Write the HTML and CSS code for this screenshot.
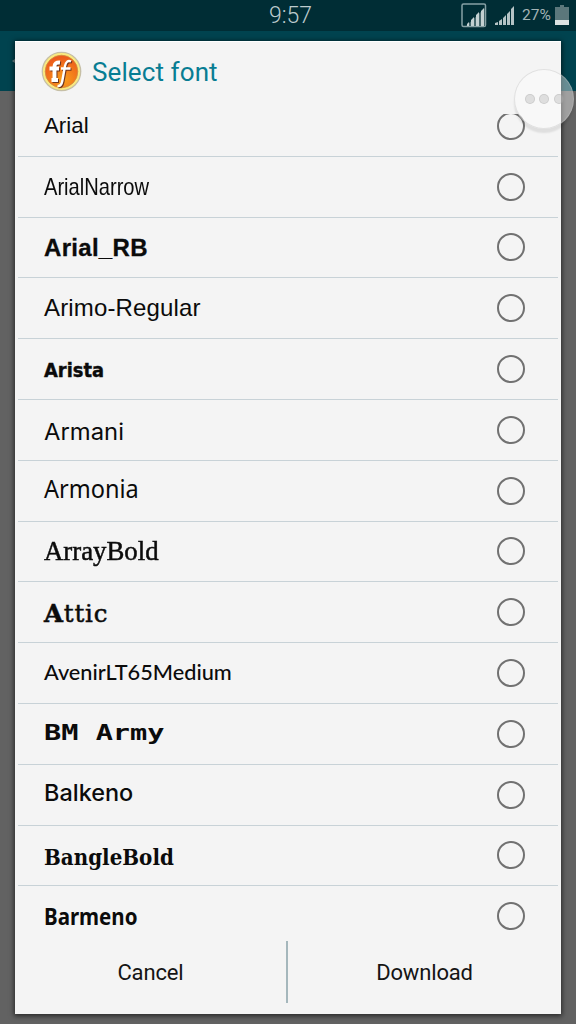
FILE: index.html
```html
<!DOCTYPE html>
<html lang="en">
<head>
<meta charset="utf-8">
<title>Select font</title>
<link rel="stylesheet" href="styles.css">
</head>
<body>
<div class="screen">
  <header class="status">
    <span class="clock">9:57</span>
    <div class="tray">
      <svg class="sim" width="26" height="25" viewBox="0 0 26 25"><rect x="1" y="1" width="23.5" height="22.5" rx="1.5" fill="none" stroke="#86a1a5" stroke-width="1.5"/><path d="M5 23L24 5V23Z" fill="#45666b"/><path d="M6 23v-2l2-2v4zM10 23v-6l3-3v9zM15 23v-11l3-3v14zM20 23V8l3-3v18z" fill="#c3d0d1"/></svg>
      <svg class="bars" width="20" height="21" viewBox="0 0 20 21"><path d="M0 20v-2l3-1v3zM4 20v-4l3-2v6zM8 20v-7l3-3v10zM12 20V9l3-3v14zM16 20V4l3-3v19z" fill="#b5c3c5"/></svg>
      <span class="percent">27%</span>
      <svg class="battery" width="14" height="21" viewBox="0 0 14 21"><path d="M5 0h4v2h5v14H0V2h5z" fill="#5b777b"/><path d="M0 15h14v5H0z" fill="#dce2e2"/></svg>
    </div>
  </header>
  <div class="appbar"><svg width="6" height="8" viewBox="0 0 6 8"><path d="M6 0L0 4L6 8Z" fill="#71898d"/></svg></div>
  <section class="dialog">
    <div class="title">
      <svg width="41" height="41" viewBox="0 0 41 41">
        <defs><radialGradient id="orange" cx=".55" cy=".75" r=".7"><stop offset="0" stop-color="#f9a01b"/><stop offset="1" stop-color="#ed5a1c"/></radialGradient></defs>
        <circle cx="20.5" cy="20.5" r="19.2" fill="#faea80" stroke="#c6bfa6" stroke-width="1.3"/>
        <circle cx="20.5" cy="20.5" r="16.3" fill="url(#orange)" stroke="#cf8a42" stroke-width=".8"/>
        <g class="mark" fill="none">
          <path d="M13.500 30V15.500Q13.500 11 19 11.500M8.500 17.500H18M10.500 29H17" stroke-width="3.900"/>
          <path d="M30 10.500Q25.500 8.500 24 15L21.300 30Q20.300 35.500 16.500 35M20 17.500H29.500" stroke-width="2.400"/>
        </g>
      </svg>
      <h1>Select font</h1>
    </div>
    <div class="list">
      <div class="row"><span class="arial">Arial</span><i class="radio"></i></div>
      <div class="row"><span class="narrow">ArialNarrow</span><i class="radio"></i></div>
      <div class="row"><span class="arial-rb">Arial_RB</span><i class="radio"></i></div>
      <div class="row"><span class="arimo">Arimo-Regular</span><i class="radio"></i></div>
      <div class="row"><span class="arista">Arista</span><i class="radio"></i></div>
      <div class="row"><span class="armani">Armani</span><i class="radio"></i></div>
      <div class="row"><span class="armonia">Armonia</span><i class="radio"></i></div>
      <div class="row"><span class="array">ArrayBold</span><i class="radio"></i></div>
      <div class="row"><span class="attic"><b>A</b>ttic</span><i class="radio"></i></div>
      <div class="row"><span class="avenir">AvenirLT65Medium</span><i class="radio"></i></div>
      <div class="row"><span class="army">BM Army</span><i class="radio"></i></div>
      <div class="row"><span class="balkeno">Balkeno</span><i class="radio"></i></div>
      <div class="row"><span class="bangle">BangleBold</span><i class="radio"></i></div>
      <div class="row"><span class="barmeno">Barmeno</span><i class="radio"></i></div>
    </div>
    <div class="actions"><div class="action">Cancel</div><div class="action">Download</div></div>
  </section>
  <div class="floating"><i></i><i></i><i></i></div>
</div>
</body>
</html>
```
FILE: styles.css
```css
* { box-sizing: border-box; }
body { margin: 0; font-family: Roboto, sans-serif; }
.screen { position: relative; width: 576px; height: 1024px; overflow: hidden; background: #626262; }
.status { height: 31px; background: #002d35; display: flex; justify-content: flex-end; position: relative; }
.clock { position: absolute; left: 269px; top: 2px; font-size: 23px; line-height: 28px; font-weight: 300; color: #bdcbcd; }
.tray { display: flex; align-items: flex-start; padding-right: 7px; }
.sim { margin-top: 3px; }
.bars { margin: 5px 0 0 8px; }
.percent { width: 30px; margin: 6px 3px 0 7px; font-size: 15.5px; line-height: 19px; color: #a4b4b6; }
.battery { margin-top: 5px; }
.appbar { height: 60px; background: #00434f; padding: 26px 0 0 12px; }
.appbar svg { display: block; }
.dialog { position: absolute; left: 15px; top: 41px; width: 546px; height: 973px; background: #f4f4f4; border-top: 1px solid #fff; box-shadow: 0 1px 5px 1px rgba(0, 0, 0, .6); display: flex; flex-direction: column; }
.title { height: 72px; flex: none; display: flex; padding: 9px 0 0 26px; gap: 10px; }
.title h1 { margin: 2px 0 0; font-size: 26px; line-height: 38px; font-weight: 400; color: #087d93; letter-spacing: .1px; }
.mark { stroke: #fff; filter: drop-shadow(1px 1px .5px #70351f); }
.list { height: 826px; flex: none; margin: 0 3px; overflow: hidden; }
.row { height: 60.8px; padding: 0 33px 0 26px; border-bottom: 1px solid #c8d2d7; display: flex; align-items: center; justify-content: space-between; color: #0b0b0b; }
.row:first-child { margin-top: -18px; }
.row:last-child { border-bottom-color: transparent; }
.row span { white-space: nowrap; transform-origin: 0 50%; }
.radio { width: 28px; height: 28px; border: 2px solid #717171; border-radius: 50%; }
.arial { font: 22.3px "Liberation Sans", sans-serif; }
.narrow { font: 24px "Liberation Sans", sans-serif; transform: scaleX(.838); }
.arial-rb { font: bold 24px "Liberation Sans", sans-serif; letter-spacing: .3px; -webkit-text-stroke: .3px; transform: translateY(1px); }
.arimo { font: 24px "Liberation Sans", sans-serif; letter-spacing: .15px; }
.arista { font: bold 19px "DejaVu Sans", sans-serif; transform: translateY(1px) scaleX(.94); -webkit-text-stroke: .4px; }
.armani { font: 22.5px Inter, sans-serif; transform: translateY(2px) scaleX(1.06); }
.armonia { font: 24.5px "Noto Sans", sans-serif; transform: translateY(-2px) scaleX(.96); }
.array { font: 27px "Liberation Serif", serif; -webkit-text-stroke: .5px; transform: scaleX(.992); }
.attic { font: 24.5px "DejaVu Serif", serif; letter-spacing: .8px; -webkit-text-stroke: .5px; transform: translateY(1px); }
.avenir { font: 500 21.5px Lato, sans-serif; transform: translateY(-1px) scaleX(1.01); }
.army { font: bold 22px "DejaVu Sans Mono", monospace; transform: translateY(-1px) scaleX(1.3); }
.balkeno { font: 500 23px Inter, sans-serif; transform: translateY(-2px) scaleX(1.02); }
.bangle { font: bold 23px "DejaVu Serif", serif; transform: translateY(1px) scaleX(.865); }
.barmeno { font: bold 24px "Noto Sans", sans-serif; transform: translateY(-1px) scaleX(.855); }
.actions { flex: 1; display: flex; padding-top: 1px; }
.action { flex: 0 0 271px; height: 62px; display: flex; align-items: center; justify-content: center; font-size: 22px; color: #141414; letter-spacing: -.15px; }
.action + .action { flex: 1; border-left: 2px solid #a5b7bc; }
.floating { position: absolute; left: 514px; top: 69px; width: 60px; height: 60px; border-radius: 50%; background: rgba(255, 255, 255, .4); border: 1px solid rgba(190, 190, 190, .4); box-shadow: 0 4px 2px rgba(0, 0, 0, .09); display: flex; align-items: center; justify-content: center; gap: 4.5px; }
.floating i { width: 10px; height: 10px; border-radius: 50%; background: rgba(180, 180, 180, .38); border: 1px solid rgba(130, 130, 130, .2); }
```
